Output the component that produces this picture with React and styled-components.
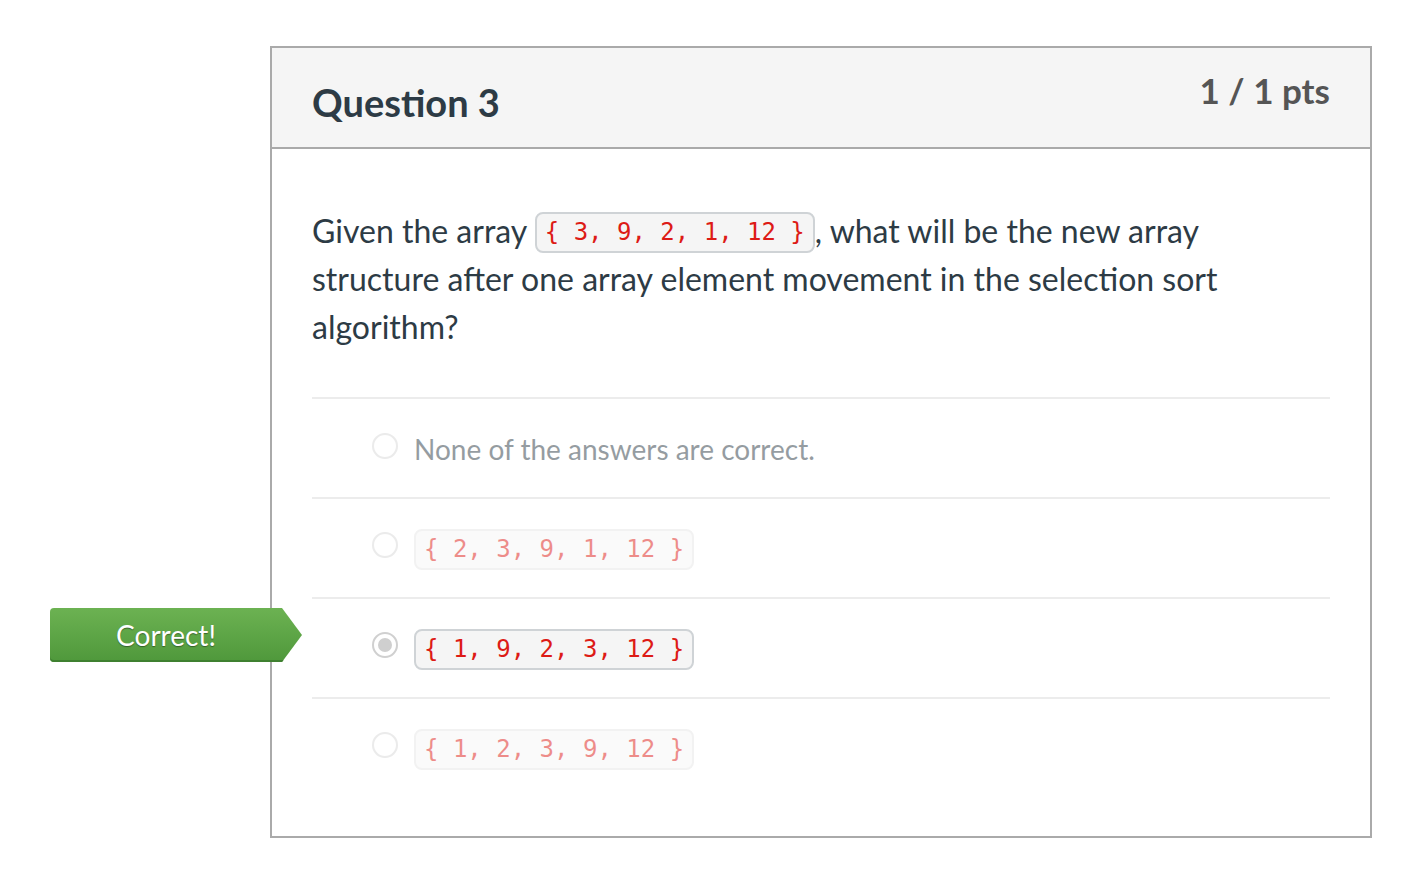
import React from "react";
import styled, { createGlobalStyle } from "styled-components";

const GlobalStyle = createGlobalStyle`
	body {
		margin: 0;
		background: #ffffff;
		font-family: Lato, "Open Sans", sans-serif;
		color: #2d3b45;
	}
`;

const Page = styled.div`
	padding: 46px 0 0 270px;
`;

const Card = styled.section`
	position: relative;
	width: 1098px;
	height: 788px;
	border: 2px solid #aaaaaa;
	display: flex;
	flex-direction: column;
`;

const Header = styled.header`
	height: 99px;
	background: #f5f5f5;
	border-bottom: 2px solid #aaaaaa;
	display: flex;
	justify-content: space-between;
	padding: 0 40px;
`;

const Title = styled.h2`
	margin: 0;
	padding-top: 30px;
	font-size: 38px;
	font-weight: 700;
	color: #2d3b45;
	line-height: 48px;
`;

const Points = styled.div`
	padding-top: 20px;
	font-size: 35px;
	font-weight: 700;
	color: #555555;
	line-height: 44px;
`;

const Body = styled.div`
	padding: 58px 40px 0;
`;

const QuestionText = styled.p`
	margin: 0 0 46px;
	font-size: 32px;
	line-height: 48px;
`;

const Code = styled.code`
	display: inline-block;
	box-sizing: border-box;
	font-family: "DejaVu Sans Mono", monospace;
	font-size: 24px;
	line-height: 37px;
	height: 41px;
	padding: 0 8px;
	border: 2px solid ${p => (p.$muted ? "#e6e6e6" : "#cfd3d6")};
	border-radius: 8px;
	background: ${p => (p.$muted ? "#f7f7f7" : "#f5f5f5")};
	color: #dd1b16;
	vertical-align: ${p => (p.$inline ? "top" : "baseline")};
	margin-top: ${p => (p.$inline ? "5px" : "0")};
	white-space: pre;
`;

const Answers = styled.div`
	border-top: 2px solid #ececec;
`;

const Row = styled.div`
	position: relative;
	box-sizing: border-box;
	height: 100px;
	border-bottom: ${p => (p.$last ? "none" : "2px solid #ececec")};
	padding: 30px 0 0 60px;
`;

const Choice = styled.div`
	display: flex;
	align-items: flex-start;
	gap: 16px;
	opacity: ${p => (p.$picked ? 1 : 0.5)};
`;

const Radio = styled.span`
	box-sizing: border-box;
	width: 26px;
	height: 26px;
	margin-top: ${p => p.$drop}px;
	border-radius: 50%;
	border: 2px solid ${p => (p.$checked ? "#d0d0d0" : "#d8d8d8")};
	background: #ffffff;
	display: flex;
	align-items: center;
	justify-content: center;
	flex: none;
	&::after {
		content: "";
		display: ${p => (p.$checked ? "block" : "none")};
		width: 14px;
		height: 14px;
		border-radius: 50%;
		background: #cfcfcf;
	}
`;

const AnswerText = styled.span`
	font-size: 28px;
	color: #2d3b45;
	line-height: 40px;
`;

const Badge = styled.div`
	position: absolute;
	left: -262px;
	top: 9px;
	width: 252px;
	height: 54px;
	box-sizing: border-box;
	padding-right: 20px;
	border-radius: 4px 0 0 4px;
	background: linear-gradient(#6cb252, #4f983b);
	box-shadow: inset 0 -2px 0 #3f8030;
	clip-path: polygon(0 0, calc(100% - 20px) 0, 100% 50%, calc(100% - 20px) 100%, 0 100%);
	display: flex;
	align-items: center;
	justify-content: center;
	color: #ffffff;
	font-size: 28px;
	text-shadow: 0 1px 1px rgba(0, 0, 0, 0.4);
`;

const answers = [
	{ text: "None of the answers are correct.", plain: true, drop: 4 },
	{ text: "{ 2, 3, 9, 1, 12 }", drop: 3 },
	{ text: "{ 1, 9, 2, 3, 12 }", picked: true, correct: true, drop: 3 },
	{ text: "{ 1, 2, 3, 9, 12 }", drop: 3 },
];

const App = () => {
	return (
		<React.Fragment>
			<GlobalStyle />
			<Page>
				<Card>
					<Header>
						<Title>Question 3</Title>
						<Points>1 / 1 pts</Points>
					</Header>
					<Body>
						<QuestionText>
							Given the array <Code $inline>{"{ 3, 9, 2, 1, 12 }"}</Code>, what will be the new array
							structure after one array element movement in the selection sort algorithm?
						</QuestionText>
						<Answers>
							{answers.map((a, i) => (
								<Row key={i} $last={i === answers.length - 1}>
									{a.correct && <Badge>Correct!</Badge>}
									<Choice $picked={a.picked}>
										<Radio $checked={a.picked} $drop={a.drop} />
										{a.plain ? (
											<AnswerText>{a.text}</AnswerText>
										) : (
											<Code $muted={!a.picked}>{a.text}</Code>
										)}
									</Choice>
								</Row>
							))}
						</Answers>
					</Body>
				</Card>
			</Page>
		</React.Fragment>
	);
};

export default App;
